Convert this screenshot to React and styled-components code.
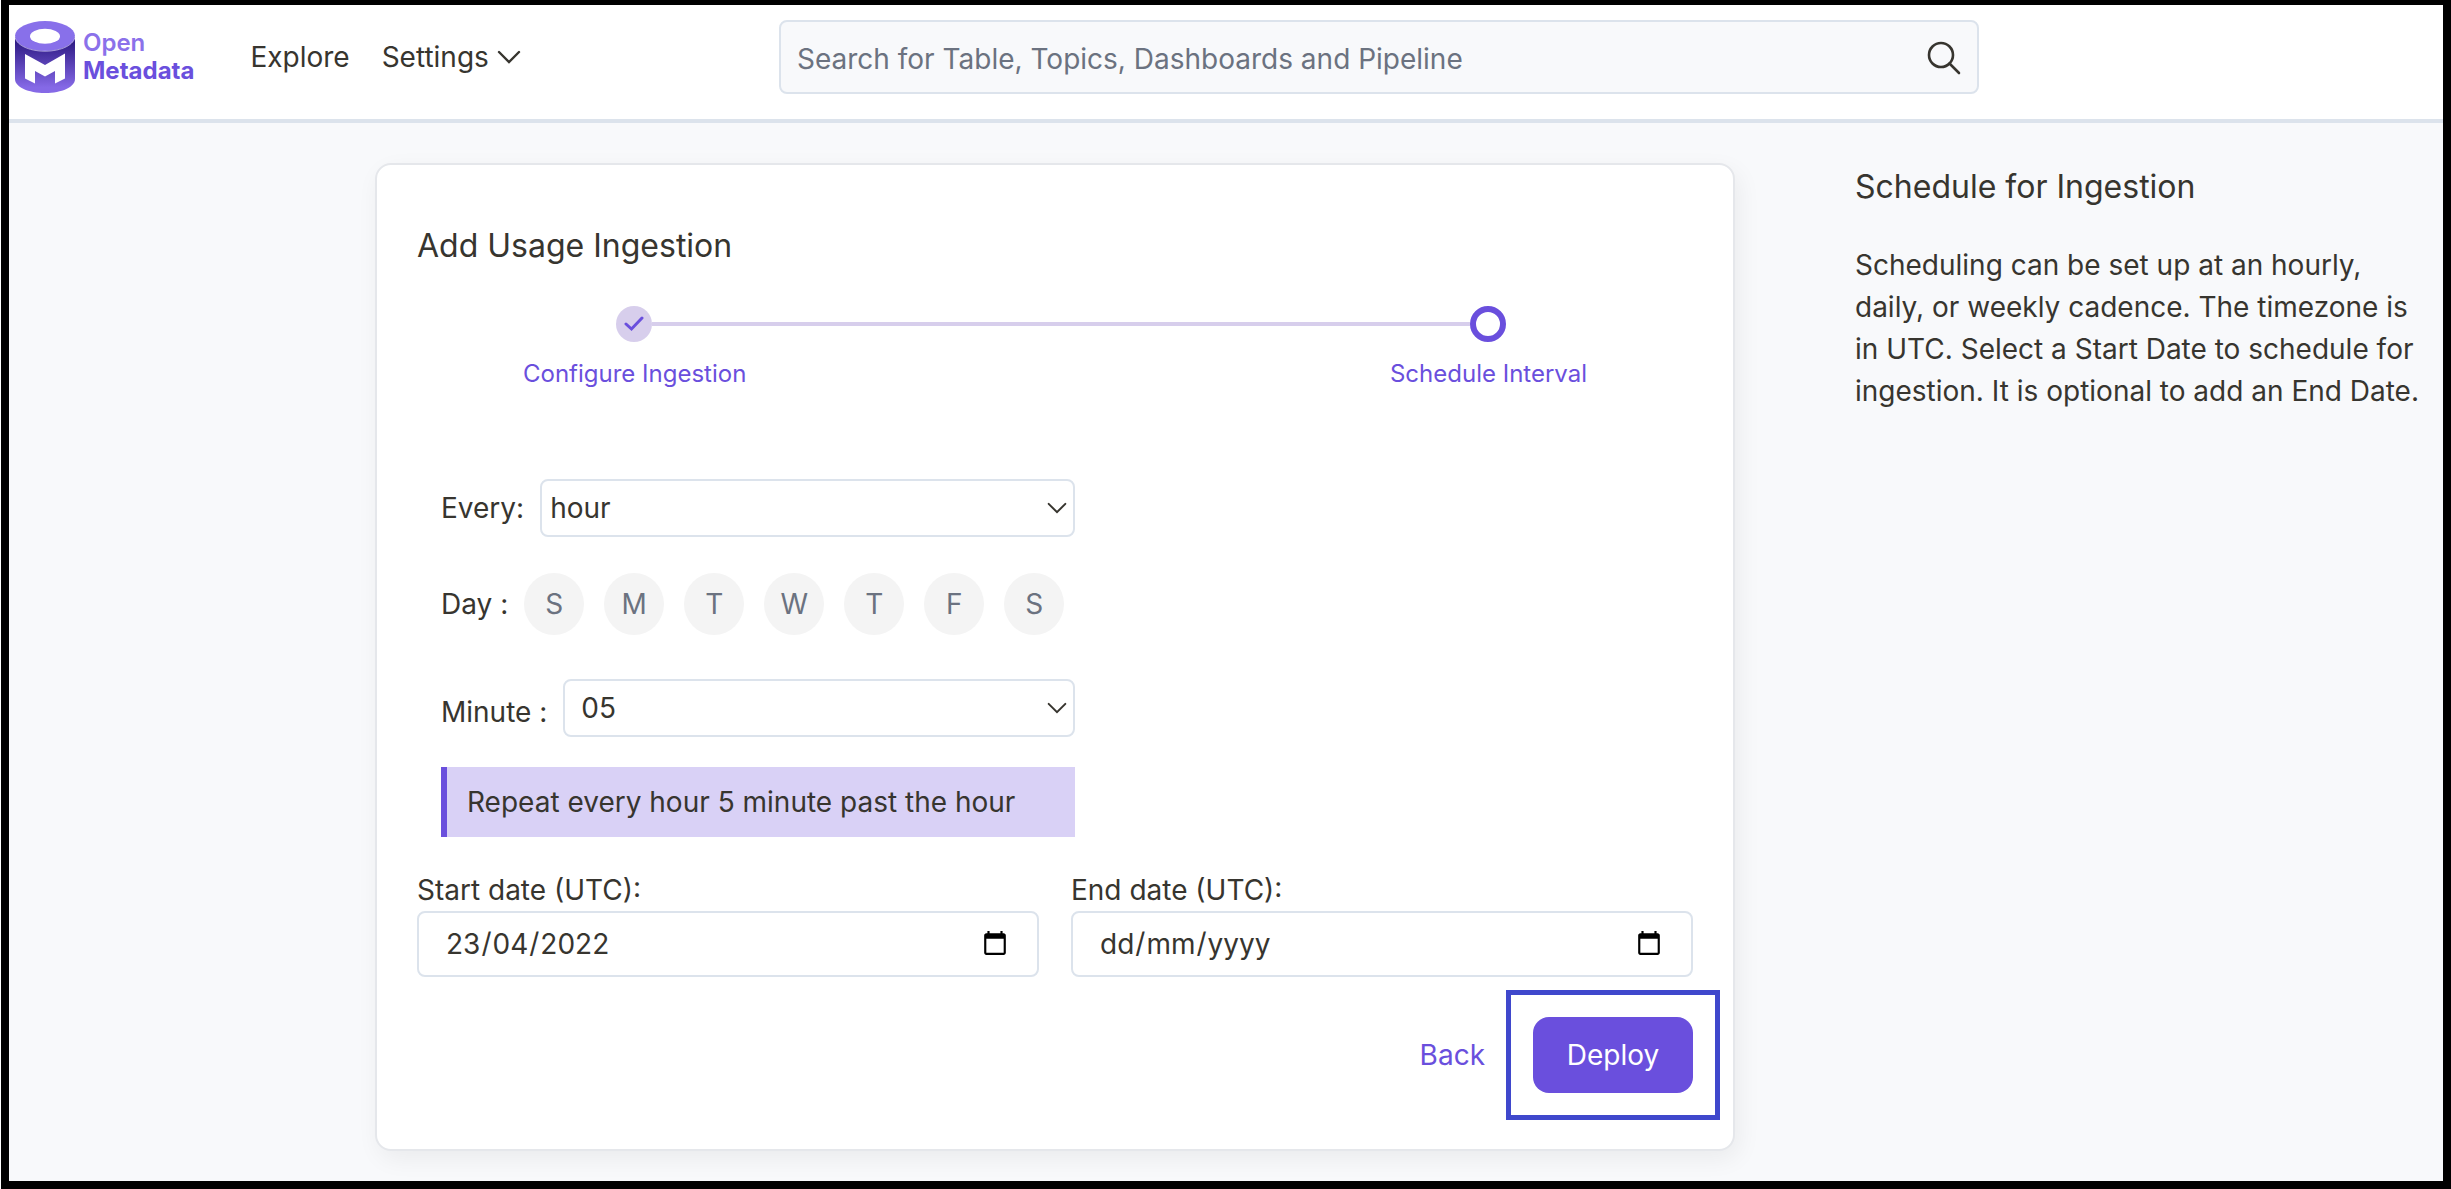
import React from "react";
import styled, { createGlobalStyle } from "styled-components";

const color = {
  text: "#37352f",
  muted: "#6b7280",
  primary: "#6a4fdd",
  primaryLight: "#d7ceec",
  border: "#dce3ec",
  page: "#f8f9fb",
};

const GlobalStyle = createGlobalStyle`
  *, *::before, *::after { box-sizing: border-box; }
  body {
    margin: 0;
    background: #ffffff;
    color: ${color.text};
    font-family: Inter, "Liberation Sans", sans-serif;
    font-size: 28px;
    line-height: 42px;
  }
  button, input, select { font: inherit; color: inherit; }
`;

const Frame = styled.div`
  min-height: 100vh;
  margin-left: 1px;
  border: 8px solid #000000;
  border-top-width: 5px;
  background: ${color.page};
`;

const Header = styled.header`
  display: grid;
  grid-template-columns: minmax(0, 770fr) minmax(0, 1200fr) minmax(0, 464fr);
  align-items: center;
  height: 118px;
  padding-bottom: 10px;
  background: #ffffff;
  border-bottom: 4px solid ${color.border};
`;

const HeaderLeft = styled.div`
  display: flex;
  align-items: center;
  gap: 56px;
  padding-left: 6px;
`;

const Brand = styled.a`
  display: flex;
  align-items: center;
  gap: 8px;
  color: ${color.primary};
  text-decoration: none;
`;

const BrandName = styled.span`
  display: flex;
  flex-direction: column;
  font-size: 24px;
  line-height: 28px;
  font-weight: 700;
`;

const BrandTop = styled.span`
  color: #8b71ea;
  font-weight: 600;
`;

const Nav = styled.nav`
  display: flex;
  align-items: center;
  gap: 32px;
`;

const NavLink = styled.a`
  color: inherit;
  text-decoration: none;
`;

const NavButton = styled.button`
  display: flex;
  align-items: center;
  gap: 8px;
  padding: 0;
  border: 0;
  background: none;
`;

const Search = styled.form`
  display: flex;
  align-items: center;
  height: 74px;
  padding: 2px 16px 0;
  border: 2px solid ${color.border};
  border-radius: 8px;
  background: ${color.page};
`;

const SearchInput = styled.input`
  flex: 1;
  min-width: 0;
  padding: 2px 0 0;
  border: 0;
  outline: 0;
  background: none;
  &::placeholder { color: ${color.muted}; opacity: 1; }
`;

const IconButton = styled.button`
  display: flex;
  padding: 0;
  border: 0;
  background: none;
`;

const Main = styled.main`
  display: grid;
  grid-template-columns: minmax(0, 1360fr) minmax(0, 566fr);
  gap: 120px;
  align-items: start;
  padding: 40px 22px 0 366px;
`;

const Card = styled.section`
  padding: 57px 40px 56px;
  border: 2px solid #e5e7eb;
  border-radius: 16px;
  background: #ffffff;
  box-shadow: 4px 8px 24px rgba(0, 0, 0, 0.06);
`;

const Title = styled.h1`
  margin: 0;
  font-size: 32px;
  line-height: 48px;
  font-weight: 400;
`;

const Track = styled.div`
  display: flex;
  align-items: center;
  margin-top: 36px;
  padding: 0 187px 0 199px;
`;

const Dot = styled.span`
  display: flex;
  align-items: center;
  justify-content: center;
  width: 36px;
  height: 36px;
  border-radius: 50%;
  background: ${(p) => (p.$done ? color.primaryLight : "#ffffff")};
  border: ${(p) => (p.$done ? "0" : `6px solid ${color.primary}`)};
`;

const TrackLine = styled.span`
  flex: 1;
  height: 4px;
  background: ${color.primaryLight};
`;

const StepLabels = styled.ol`
  display: flex;
  justify-content: space-between;
  margin: 14px 0 0;
  padding: 0 106px;
  list-style: none;
  color: ${color.primary};
  font-size: 24px;
  line-height: 36px;
`;

const Schedule = styled.div`
  display: flex;
  flex-direction: column;
  max-width: 634px;
  margin: 87px 0 32px 24px;
`;

const Row = styled.div`
  display: flex;
  align-items: center;
  gap: 16px;
  margin-bottom: ${(p) => p.$after}px;
`;

const SelectBox = styled.div`
  display: grid;
  flex: 1;
  align-items: center;
  margin-bottom: ${(p) => p.$below || 0}px;
  & > * { grid-area: 1 / 1; }
  & > svg { justify-self: end; margin-right: 8px; pointer-events: none; }
`;

const Select = styled.select`
  width: 100%;
  height: 58px;
  padding: 0 ${(p) => p.$inset}px;
  border: 2px solid ${color.border};
  border-radius: 8px;
  background: #ffffff;
  appearance: none;
`;

const Days = styled.div`
  display: flex;
  gap: 20px;
`;

const Day = styled.button`
  width: 60px;
  height: 62px;
  padding: 0;
  border: 0;
  border-radius: 50%;
  background: #f4f4f4;
  color: ${color.muted};
`;

const Summary = styled.p`
  margin: 0;
  padding: 14px 20px;
  border-left: 6px solid ${color.primary};
  background: #d9d1f6;
`;

const Dates = styled.div`
  display: grid;
  grid-template-columns: 1fr 1fr;
  gap: 32px;
`;

const Field = styled.div`
  display: flex;
  flex-direction: column;
`;

/* The grid puts the day first and lets the two slashes fill the free cells. */
const DateInput = styled.input`
  width: 100%;
  height: 66px;
  padding: 0 26px;
  border: 2px solid ${color.border};
  border-radius: 8px;
  background: #ffffff;
  &::-webkit-datetime-edit-fields-wrapper {
    display: inline-grid;
    grid-template-columns: repeat(5, auto);
    justify-content: start;
  }
  &::-webkit-datetime-edit-day-field { grid-area: 1 / 1; }
  &::-webkit-datetime-edit-month-field { grid-area: 1 / 3; }
  &::-webkit-datetime-edit-year-field { grid-area: 1 / 5; }
`;

const Actions = styled.div`
  display: flex;
  align-items: center;
  justify-content: flex-end;
  gap: 48px;
  margin-top: 40px;
`;

const BackButton = styled.button`
  padding: 0;
  border: 0;
  background: none;
  color: ${color.primary};
`;

const Highlight = styled.div`
  display: flex;
  outline: 5px solid #3f48cc;
  outline-offset: 22px;
`;

const DeployButton = styled.button`
  width: 160px;
  height: 76px;
  padding: 0;
  border: 0;
  border-radius: 16px;
  background: ${color.primary};
  color: #ffffff;
`;

const AsideText = styled.p`
  margin: 33px 0 0;
`;

const Logo = () => (
  <svg width="60" height="72" viewBox="0 0 60 72" aria-hidden="true">
    <defs>
      <linearGradient id="drum" x1="0" y1="0" x2="0" y2="1">
        <stop offset="0.1" stopColor="#2f1b85" />
        <stop offset="0.9" stopColor="#8569e6" />
      </linearGradient>
    </defs>
    <path d="M0 15V58C0 66 13 72 30 72S60 66 60 58V15Z" fill="url(#drum)" />
    <ellipse cx="30" cy="15" rx="30" ry="15" fill="#8870ea" />
    <path d="M0 15C0 23.500 13.400 30.200 30 30.200S60 23.500 60 15" fill="none" stroke="#d9d1f6" strokeWidth="0.7" />
    <ellipse cx="30" cy="15.200" rx="15" ry="7.500" fill="#fff" />
    <path d="M10 33L30 44L50 32.500V57.500L40 62.500V50L30 55.500L20 50V62.500L10 57.500Z" fill="#fff" />
  </svg>
);

const Chevron = ({ width, height }) => (
  <svg width={width} height={height} viewBox="0 0 24 14" fill="none" stroke={color.text} strokeWidth="2.400" strokeLinecap="round" aria-hidden="true">
    <path d="M2 2L12 12L22 2" />
  </svg>
);

const SearchIcon = () => (
  <svg width="34" height="34" viewBox="0 0 34 34" fill="none" stroke={color.text} strokeWidth="2.600" strokeLinecap="round" aria-hidden="true">
    <circle cx="14" cy="14" r="12" />
    <path d="M22.500 22.500L32 32" />
  </svg>
);

const Check = () => (
  <svg width="22" height="16" viewBox="0 0 20 16" fill="none" stroke={color.primary} strokeWidth="3" strokeLinecap="round" aria-hidden="true">
    <path d="M2 8L7.500 13L18 2" />
  </svg>
);

const days = [
  ["S", "Sunday"],
  ["M", "Monday"],
  ["T", "Tuesday"],
  ["W", "Wednesday"],
  ["T", "Thursday"],
  ["F", "Friday"],
  ["S", "Saturday"],
];

export default function App() {
  return (
    <Frame>
      <GlobalStyle />
      <Header>
        <HeaderLeft>
          <Brand href="#">
            <Logo />
            <BrandName>
              <BrandTop>Open</BrandTop>
              <span>Metadata</span>
            </BrandName>
          </Brand>
          <Nav>
            <NavLink href="#explore">Explore</NavLink>
            <NavButton type="button">
              Settings
              <Chevron width={24} height={14} />
            </NavButton>
          </Nav>
        </HeaderLeft>
        <Search role="search">
          <SearchInput type="text" aria-label="Search" placeholder="Search for Table, Topics, Dashboards and Pipeline" />
          <IconButton type="button" aria-label="Search">
            <SearchIcon />
          </IconButton>
        </Search>
      </Header>
      <Main>
        <Card>
          <Title>Add Usage Ingestion</Title>
          <Track>
            <Dot $done>
              <Check />
            </Dot>
            <TrackLine />
            <Dot />
          </Track>
          <StepLabels>
            <li>Configure Ingestion</li>
            <li aria-current="step">Schedule Interval</li>
          </StepLabels>
          <Schedule>
            <Row $after={36}>
              <label htmlFor="every">Every:</label>
              <SelectBox>
                <Select id="every" defaultValue="hour" $inset={8}>
                  <option>hour</option>
                  <option>day</option>
                  <option>week</option>
                </Select>
                <Chevron width={20} height={12} />
              </SelectBox>
            </Row>
            <Row $after={44}>
              <span id="day-label">Day :</span>
              <Days role="group" aria-labelledby="day-label">
                {days.map(([letter, name]) => (
                  <Day key={name} type="button" aria-label={name}>
                    {letter}
                  </Day>
                ))}
              </Days>
            </Row>
            <Row $after={22}>
              <label htmlFor="minute">Minute :</label>
              <SelectBox $below={8}>
                <Select id="minute" defaultValue="05" $inset={16}>
                  <option>00</option>
                  <option>05</option>
                  <option>10</option>
                </Select>
                <Chevron width={20} height={12} />
              </SelectBox>
            </Row>
            <Summary>Repeat every hour 5 minute past the hour</Summary>
          </Schedule>
          <Dates>
            <Field>
              <label htmlFor="start">Start date (UTC):</label>
              <DateInput id="start" type="date" defaultValue="2022-04-23" />
            </Field>
            <Field>
              <label htmlFor="end">End date (UTC):</label>
              <DateInput id="end" type="date" />
            </Field>
          </Dates>
          <Actions>
            <BackButton type="button">Back</BackButton>
            <Highlight>
              <DeployButton type="button">Deploy</DeployButton>
            </Highlight>
          </Actions>
        </Card>
        <aside>
          <Title as="h2">Schedule for Ingestion</Title>
          <AsideText>
            Scheduling can be set up at an hourly, daily, or weekly cadence. The timezone is in UTC. Select a Start Date
            to schedule for ingestion. It is optional to add an End Date.
          </AsideText>
        </aside>
      </Main>
    </Frame>
  );
}
